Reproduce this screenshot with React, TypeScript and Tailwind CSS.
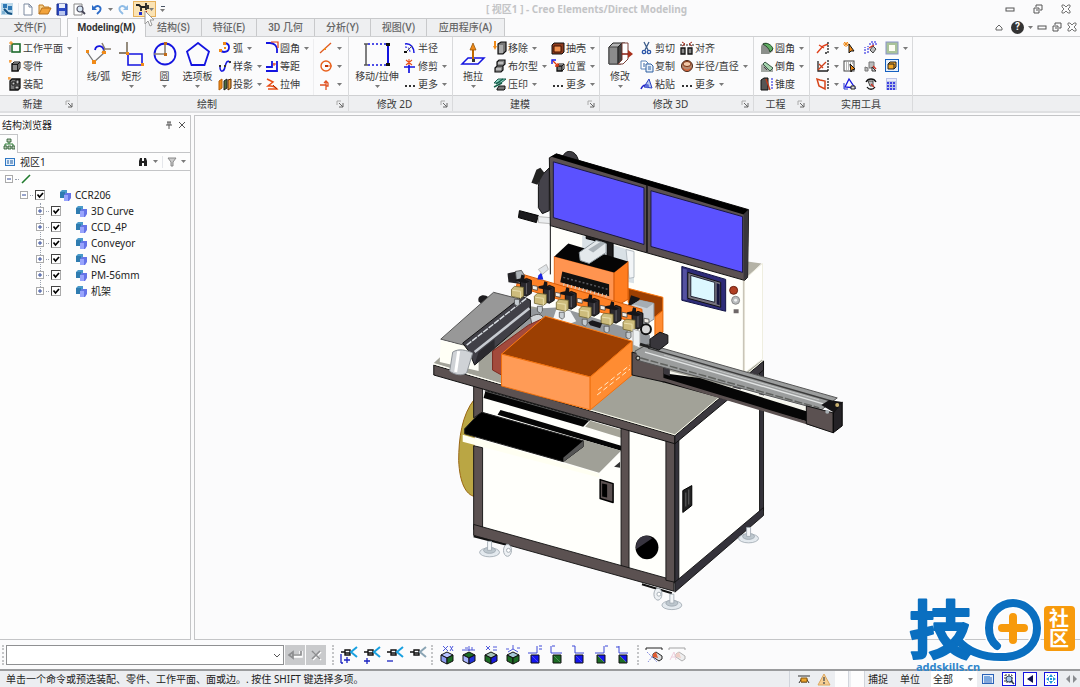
/**
 * Creo Elements/Direct Modeling: main window.
 * --------------------------------------------------------------------------
 * Quick access bar, ribbon, structure browser, 3D viewport, command line and
 * status bar. The viewport takes whatever height the bars leave over.
 */
import type { ReactNode } from "react";

const BLUE = "#1414e0";
const ORANGE = "#f08a18";

/* ------------------------------------------------------------------ icons */

function Svg({ w = 14, h = 14, children }: { w?: number; h?: number; children: ReactNode }) {
  return (
    <svg width={w} height={h} viewBox={`0 0 ${w} ${h}`} fill="none" className="shrink-0" aria-hidden="true">
      {children}
    </svg>
  );
}

const ICONS: Record<string, ReactNode> = {
  workplane: (
    <Svg>
      <rect x="4" y="3" width="8" height="8" stroke="#1d6b2c" strokeWidth="1.6" />
      <path d="M1 2h4M3 0v4" stroke={ORANGE} />
      <path d="M2 4v7" stroke="#555" />
    </Svg>
  ),
  part: (
    <Svg>
      <path d="M4 5h6v7H4z" fill="#8d8d8d" stroke="#111" strokeWidth="1.4" />
      <path d="M4 5l2-2h6l-2 2zM10 5l2-2v6l-2 3z" fill="#c8c8c8" stroke="#111" />
      <path d="M1 2h3M2 1v3" stroke={ORANGE} />
    </Svg>
  ),
  assembly: (
    <Svg>
      <path d="M2 4l2-2h8v9l-2 2H2z" fill="#777" stroke="#111" strokeWidth="1.3" />
      <path d="M4 5h3v3H4zM8 3h3v4H8zM7 9h4v3H7z" fill="#ccc" stroke="#111" />
      <path d="M0 1h3M1 0v3" stroke={ORANGE} />
    </Svg>
  ),
  arc: (
    <Svg>
      <path d="M7 2c6 1 5 9-1 9-2 0-3-1-4-2" stroke={BLUE} strokeWidth="1.8" />
      <path d="M5 1h3v3H5zM1 8h3v3H1zM6 6h2v2H6z" fill={ORANGE} />
    </Svg>
  ),
  spline: (
    <Svg>
      <path d="M2 8c0 6 4 5 5 0s3-8 5-4" stroke={BLUE} strokeWidth="1.5" />
      <path d="M1 6h2v2H1zM6 6h2v2H6zM11 2h2v2h-2z" fill="#333" />
    </Svg>
  ),
  project: (
    <Svg>
      <path d="M1 4l3-2v9l-3 2z" fill={ORANGE} stroke="#b45f06" />
      <path d="M6 4l3-2v9l-3 2z" fill="#4d6b3c" stroke="#222" />
      <path d="M10 3l3-1v9l-3 2z" fill="#e8a040" stroke="#5a2a00" />
    </Svg>
  ),
  fillet2d: (
    <Svg>
      <path d="M1 2h4c4 0 7 3 7 6v4" stroke={BLUE} strokeWidth="1.8" />
      <path d="M6 1h7v6" stroke="#e03a10" strokeWidth="1.2" />
    </Svg>
  ),
  offset: (
    <Svg>
      <path d="M1 12h11V2M1 8h6V2" stroke={BLUE} strokeWidth="1.8" />
      <path d="M8 5h3M9 4v3" stroke="#e03a10" />
    </Svg>
  ),
  stretch: (
    <Svg>
      <path d="M2 2l6 3-5 4c3 0 6-1 9 3H3" stroke="#e8501a" strokeWidth="1.5" />
      <path d="M8 8l4 4" stroke="#b02800" />
    </Svg>
  ),
  line: (
    <Svg>
      <path d="M1 12L12 2" stroke="#e05a20" strokeWidth="1.3" />
      <path d="M5 7h2v2H5z" fill={ORANGE} />
    </Svg>
  ),
  circleSmall: (
    <Svg>
      <circle cx="7" cy="7" r="5" stroke="#e8601c" strokeWidth="1.4" />
      <path d="M6 6h3v2H6z" fill="#c03000" />
      <path d="M9 7h4" stroke="#e8601c" />
    </Svg>
  ),
  point: (
    <Svg>
      <path d="M1 8h6M7 13V4M5 6l2-2 2 2v3H7" stroke="#e05020" strokeWidth="1.3" />
    </Svg>
  ),
  radius: (
    <Svg>
      <path d="M2 3c6-1 9 4 9 9" stroke={BLUE} strokeWidth="1.5" />
      <path d="M2 6c4 0 5 2 5 6" stroke={BLUE} strokeDasharray="2 1" />
      <path d="M1 10h3v2H1z" fill="#111" />
      <path d="M4 10l5-5" stroke="#555" />
    </Svg>
  ),
  trim: (
    <Svg>
      <path d="M1 8h11M6 6v8" stroke={BLUE} strokeWidth="1.7" />
      <path d="M6 0v6M3 1l6 5M9 1L3 6" stroke="#e8501a" strokeWidth="1.1" />
    </Svg>
  ),
  dots: (
    <Svg>
      <path d="M2 8h2v2H2zM6 8h2v2H6zM10 8h2v2h-2z" fill="#333" />
    </Svg>
  ),
  remove: (
    <Svg>
      <path d="M5 3l3-2h5v9l-3 3H5z" fill="#777" stroke="#111" strokeWidth="1.2" />
      <path d="M7 4v8M9 4v8" stroke="#ddd" />
      <path d="M1 0h2v5H1z" fill={ORANGE} />
      <path d="M0 5h4L2 9z" fill={ORANGE} />
    </Svg>
  ),
  bool: (
    <Svg>
      <path d="M4 3l2-2h6v4l-2 2H4zM2 9l2-2h6v4l-2 2H2z" fill="#888" stroke="#111" strokeWidth="1.2" />
      <path d="M5 4h5M3 10h5" stroke="#eee" />
    </Svg>
  ),
  imprint: (
    <Svg>
      <path d="M1 6l4-4h8l-5 4z" fill="#8fd3c4" stroke="#1b5e50" />
      <path d="M4 12l2-3h6v3l-1 1H4z" fill="#777" stroke="#111" />
      <path d="M3 7l7-5M1 10l8-4" stroke="#14604a" strokeWidth="1.4" />
    </Svg>
  ),
  shell: (
    <Svg>
      <path d="M1 4l2-2h10v9l-2 2H1z" fill="#8b3a1e" stroke="#111" />
      <path d="M3 5h7v6H3z" fill="#f09050" stroke="#401000" />
    </Svg>
  ),
  position: (
    <Svg>
      <path d="M6 7h5v5H6z" fill="#777" stroke="#111" strokeWidth="1.3" />
      <path d="M6 7l2-2h5l-2 2M13 5v5l-2 2" stroke="#111" />
      <path d="M2 2l5 5M7 4v3H4" stroke="#e03a10" strokeWidth="1.3" />
      <path d="M1 5V1h4" stroke={BLUE} strokeWidth="1.4" />
    </Svg>
  ),
  cut: (
    <Svg>
      <path d="M4 1l4 8M9 1L5 9" stroke="#3c5c8a" strokeWidth="1.3" />
      <circle cx="4" cy="11" r="1.7" stroke="#2a55a8" strokeWidth="1.3" />
      <circle cx="9" cy="11" r="1.7" stroke="#2a55a8" strokeWidth="1.3" />
    </Svg>
  ),
  copy: (
    <Svg>
      <path d="M1 2h5l2 2v6H1z" fill="#fff" stroke="#5a83b8" />
      <path d="M6 5h5l2 2v6H6z" fill="#e6f0fb" stroke="#2f5f9f" />
      <path d="M8 8h3M8 10h3M3 5h2M3 7h2" stroke="#2f5f9f" />
    </Svg>
  ),
  paste: (
    <Svg>
      <path d="M4 10l5-8 3 9z" fill="#b9c8ef" stroke="#2a3fc0" />
      <path d="M1 12c2-5 6-5 7-1" stroke="#2222c8" strokeWidth="1.5" />
      <circle cx="7" cy="9" r="2" fill="#5a6bd8" />
    </Svg>
  ),
  align: (
    <Svg>
      <path d="M0 4h14" stroke="#222" strokeDasharray="2 1" />
      <path d="M1 7h4v6H1zM8 7h4v6H8z" fill="#888" stroke="#111" strokeWidth="1.3" />
      <path d="M2 1l3 2-3 2M12 1L9 3l3 2" stroke="#a02a18" />
    </Svg>
  ),
  radiusDia: (
    <Svg>
      <circle cx="7" cy="7" r="5.5" fill="#b88a70" stroke="#4a2414" />
      <ellipse cx="7" cy="5" rx="4" ry="2.5" fill="#f2c8a8" stroke="#7a3010" />
      <path d="M3 9c2 3 6 3 8 0" stroke="#e05020" />
    </Svg>
  ),
  blend: (
    <Svg>
      <path d="M1 13V6c0-3 3-5 6-4l6 5v3l-4 3z" fill="#8b8f8b" />
      <path d="M3 3c4-2 9 1 10 5l-3 3C9 7 6 5 3 3z" fill="#5fae62" stroke="#23482a" />
    </Svg>
  ),
  chamfer: (
    <Svg>
      <path d="M1 13V6l4-3 8 6v4z" fill="#a3a8a3" />
      <path d="M3 5l2-2 8 6-3 3z" fill="#a8d6b0" stroke="#3a5a48" />
      <path d="M4 8l3 3" stroke="#444" />
    </Svg>
  ),
  taper: (
    <Svg>
      <path d="M1 3l3-2h4v12H1z" fill="#555" stroke="#111" />
      <path d="M6 2l4 11" stroke="#c03a1a" strokeWidth="1.4" />
      <path d="M12 1v12" stroke={BLUE} strokeDasharray="2 1" />
    </Svg>
  ),
  measA: (
    <Svg>
      <path d="M1 12l6-7 5-2M3 4l5 3" stroke="#e0401a" strokeWidth="1.4" />
      <path d="M12 1v12M9 12h3" stroke="#222" strokeWidth="1.3" strokeDasharray="2 1" />
    </Svg>
  ),
  measB: (
    <Svg>
      <path d="M2 2v10h10" stroke="#222" strokeWidth="1.3" />
      <path d="M2 11l8-8M3 5l4 4" stroke="#d0401a" strokeWidth="1.3" />
      <path d="M12 1v12" stroke="#222" strokeWidth="1.3" strokeDasharray="2 1" />
    </Svg>
  ),
  measC: (
    <Svg>
      <path d="M1 2l2 7 6 3V4L4 3z" stroke="#d8461a" strokeWidth="1.5" />
      <path d="M12 1v12" stroke="#222" strokeWidth="1.3" strokeDasharray="2 1" />
    </Svg>
  ),
  selStar: (
    <Svg>
      <path d="M3 1v5M0 3h6M1 1l4 4M5 1L1 5" stroke={ORANGE} />
      <path d="M6 3l5 7H8l-2 2z" fill={ORANGE} stroke="#111" />
    </Svg>
  ),
  selList: (
    <Svg>
      <rect x="1" y="2" width="10" height="10" fill="#fff" stroke="#444" />
      <path d="M3 4h7M3 6h5M3 8h4M3 10h4" stroke="#777" strokeDasharray="1 1" />
      <path d="M7 5l5 5-3 1-1 2z" fill={ORANGE} stroke="#111" />
    </Svg>
  ),
  angle: (
    <Svg>
      <path d="M2 10l4-8 6 9z" stroke={BLUE} strokeWidth="1.3" />
      <path d="M1 6v6h4" stroke="#2233cc" />
      <path d="M8 9h4v3H8z" fill="#ddd" stroke="#222" />
    </Svg>
  ),
  utilA: (
    <Svg>
      <path d="M1 13V6M4 12V5M5 3h8M7 1h6" stroke={BLUE} strokeDasharray="2 1" />
      <path d="M6 9l3-4 3 3-3 4z" fill="#bbb" stroke="#444" />
      <path d="M5 7l5-3" stroke="#d03020" strokeWidth="1.4" />
    </Svg>
  ),
  utilB: (
    <Svg>
      <path d="M1 8l3 1v3H1zM5 3h5v6H5z" fill="#bbb" stroke="#777" />
      <path d="M8 8l4 4H8z" fill="#ddd" stroke="#333" />
      <path d="M9 7l3 3" stroke="#d03020" strokeWidth="1.4" />
    </Svg>
  ),
  utilC: (
    <Svg>
      <path d="M2 5c2-4 8-4 10 0M11 10c-2 3-6 3-8 0" stroke="#111" strokeWidth="1.3" />
      <path d="M4 4h5v5H6z" fill="#bbb" stroke="#444" />
      <path d="M7 7l3 3" stroke="#d03020" strokeWidth="1.3" />
    </Svg>
  ),
  viewBorder: (
    <Svg>
      <rect x="1" y="1" width="12" height="12" fill="#a9c39a" stroke="#8a94c8" />
      <rect x="4" y="4" width="6" height="6" fill="#fdfdf4" />
    </Svg>
  ),
  viewBox: (
    <Svg>
      <rect x="0.5" y="0.5" width="13" height="12" fill="#e8f1fb" stroke="#1560c0" />
      <path d="M3 5l2-2h6v5l-2 2H3z" fill="#f5a623" stroke="#222" />
      <path d="M3 5h6v5" stroke="#222" />
    </Svg>
  ),
  calc: (
    <Svg>
      <rect x="1" y="1" width="11" height="12" fill="#bcc4e8" />
      <path d="M2 2h9v2H2z" fill="#e9ecfa" />
      <path d="M2 6h9M2 9h9M2 12h9" stroke={BLUE} strokeWidth="1.6" strokeDasharray="2 1" />
    </Svg>
  ),
};

const BIG_ICONS: Record<string, ReactNode> = {
  lineArc: (
    <Svg w={28} h={26}>
      <path d="M2 10l7 10L20 10" stroke="#777" strokeWidth="1.3" />
      <path d="M10 8c1-6 9-5 9 2" stroke={BLUE} strokeWidth="1.8" />
      <path d="M17 1l3 6h6M20 7l-3 4" stroke="#8a8070" strokeWidth="1.5" />
      <path d="M1 8h3v3H1zM7 18h4v4H7zM17 9h4v3h-4z" fill={ORANGE} />
    </Svg>
  ),
  rect: (
    <Svg w={28} h={26}>
      <path d="M9 0v11M1 11h8" stroke="#8a8070" strokeWidth="1.8" />
      <path d="M10 12h14v11H10z" stroke={BLUE} strokeWidth="1.6" />
      <path d="M8 10h3v3H8zM23 21h3v3h-3z" fill={ORANGE} />
    </Svg>
  ),
  circle: (
    <Svg w={28} h={26}>
      <circle cx="14" cy="12" r="10.5" stroke={BLUE} strokeWidth="1.8" />
      <path d="M14 2v10H3" stroke="#8a8070" strokeWidth="1.6" />
      <path d="M13 11h3v3h-3zM13 0h3v3h-3z" fill="#c06a18" />
    </Svg>
  ),
  palette: (
    <Svg w={28} h={26}>
      <path d="M14 1l11 8.500-4.500 13.500h-13L3 9.500z" stroke={BLUE} strokeWidth="1.8" />
    </Svg>
  ),
  move2d: (
    <Svg w={28} h={26}>
      <path d="M3 2v21M1 2h4M1 23h4" stroke="#555" strokeWidth="1.5" />
      <path d="M5 2h19M5 23h19" stroke={BLUE} strokeWidth="1.5" strokeDasharray="2 2" />
      <path d="M25 2v21" stroke={BLUE} strokeWidth="2" />
      <path d="M23 1h4v3h-4zM23 21h4v3h-4z" fill="#111" />
    </Svg>
  ),
  pull: (
    <Svg w={28} h={26}>
      <path d="M3 22l6-6h16l-6 6z" stroke={BLUE} strokeWidth="1.5" />
      <path d="M14 19V7" stroke="#c06a00" strokeWidth="2" />
      <path d="M11 8l3-7 3 7z" fill={ORANGE} stroke="#8a4a00" strokeWidth="0.7" />
      <path d="M13 17h3v3h-3z" fill="#333" />
    </Svg>
  ),
  modify: (
    <Svg w={28} h={26}>
      <path d="M3 5l4-4h12v17l-4 4H3z" fill="#b4b4b4" stroke="#222" />
      <path d="M3 5h9v17H3z" fill="#8c8c8c" stroke="#444" />
      <path d="M12 5l4-4v17l-4 4z" fill="#444" stroke="#222" />
      <path d="M16 1h6v16l-5 5h-5l4-4z" fill="#fff" stroke="#7a4038" />
      <path d="M16 12h8" stroke="#8a1c10" strokeWidth="1.5" />
      <path d="M22 8l5 4-5 4z" fill="#a8301c" />
    </Svg>
  ),
};

const Caret = ({ className = "" }: { className?: string }) => (
  <svg width="5" height="3" viewBox="0 0 5 3" className={`shrink-0 ${className}`} aria-hidden="true">
    <path d="M0 0h5L2.500 3z" fill="#7a7a7a" />
  </svg>
);

/* ----------------------------------------------------------------- ribbon */

type Item = { icon: string; label?: string; caret?: boolean; name?: string };

function Tool({ icon, label, caret, name }: Item) {
  return (
    <button type="button" aria-label={name} className="flex h-[18px] items-center whitespace-nowrap">
      {ICONS[icon]}
      {label && <span className="ml-px">{label}</span>}
      {caret && <Caret className="ml-1" />}
    </button>
  );
}

function Column({ items, className }: { items: Item[]; className: string }) {
  return (
    <div className={`flex shrink-0 flex-col items-start ${className}`}>
      {items.map((it) => (
        <Tool key={it.label ?? it.name} {...it} />
      ))}
    </div>
  );
}

function BigTool({ icon, label, caret = true, className = "w-[33px]" }: { icon: string; label: string; caret?: boolean; className?: string }) {
  return (
    <button type="button" className={`flex shrink-0 flex-col items-center self-start pt-[3px] ${className}`}>
      {BIG_ICONS[icon]}
      <span className="h-4 whitespace-nowrap leading-4">{label}</span>
      {caret && <Caret className="mt-px" />}
    </button>
  );
}

function Group({ title, width, launcher = true, children }: { title: string; width: string; launcher?: boolean; children: ReactNode }) {
  return (
    <section aria-label={title} className={`flex shrink-0 flex-col border-r border-[#d9dadc] ${width}`}>
      <div className="flex h-[58px] pt-[2px]">{children}</div>
      <div className="flex h-4 items-center border-t border-[#cfd0d2] bg-[#eeeff1]">
        <span className="flex-1 text-center">{title}</span>
        {launcher && (
          <button type="button" aria-label={`${title} …`} className="mr-1 pt-px">
            <Svg w={8} h={8}>
              <path d="M1 5V1h4" stroke="#aaa" />
              <path d="M3 3l4 4M7 3v4H3" stroke="#666" />
            </Svg>
          </button>
        )}
      </div>
    </section>
  );
}

function Ribbon() {
  return (
    <div className="flex border-b-2 border-[#dfe0e2] bg-[#fbfbfc]">
      <Group title="新建" width="w-[78px]">
        <Column
          className="pl-2"
          items={[{ icon: "workplane", label: "工作平面", caret: true }, { icon: "part", label: "零件" }, { icon: "assembly", label: "装配" }]}
        />
      </Group>
      <Group title="绘制" width="w-[271px]">
        <div className="flex pl-1">
          <BigTool icon="lineArc" label="线/弧" caret={false} />
          <BigTool icon="rect" label="矩形" />
          <BigTool icon="circle" label="圆" />
          <BigTool icon="palette" label="选项板" />
        </div>
        <Column
          className="w-[51px] pl-1"
          items={[{ icon: "arc", label: "弧", caret: true }, { icon: "spline", label: "样条", caret: true }, { icon: "project", label: "投影", caret: true }]}
        />
        <Column
          className="w-12"
          items={[{ icon: "fillet2d", label: "圆角", caret: true }, { icon: "offset", label: "等距" }, { icon: "stretch", label: "拉伸" }]}
        />
        <Column
          className="border-l border-[#eeeef0] pl-[5px]"
          items={[{ icon: "line", name: "直线", caret: true }, { icon: "circleSmall", name: "参考圆", caret: true }, { icon: "point", name: "点", caret: true }]}
        />
      </Group>
      <Group title="修改 2D" width="w-[104px]">
        <BigTool icon="move2d" label="移动/拉伸" className="w-14" />
        <Column
          className="-ml-[2px]"
          items={[{ icon: "radius", label: "半径" }, { icon: "trim", label: "修剪", caret: true }, { icon: "dots", label: "更多", caret: true }]}
        />
      </Group>
      <Group title="建模" width="w-[147px]">
        <BigTool icon="pull" label="拖拉" className="w-10" />
        <Column
          className="w-[58px]"
          items={[{ icon: "remove", label: "移除", caret: true }, { icon: "bool", label: "布尔型", caret: true }, { icon: "imprint", label: "压印", caret: true }]}
        />
        <Column
          className=""
          items={[{ icon: "shell", label: "抽壳", caret: true }, { icon: "position", label: "位置", caret: true }, { icon: "dots", label: "更多", caret: true }]}
        />
      </Group>
      <Group title="修改 3D" width="w-[154px]">
        <BigTool icon="modify" label="修改" className="w-10" />
        <Column
          className="w-10"
          items={[{ icon: "cut", label: "剪切" }, { icon: "copy", label: "复制" }, { icon: "paste", label: "粘贴" }]}
        />
        <Column
          className=""
          items={[{ icon: "align", label: "对齐" }, { icon: "radiusDia", label: "半径/直径", caret: true }, { icon: "dots", label: "更多", caret: true }]}
        />
      </Group>
      <Group title="工程" width="w-14">
        <Column
          className="pl-[6px]"
          items={[{ icon: "blend", label: "圆角", caret: true }, { icon: "chamfer", label: "倒角", caret: true }, { icon: "taper", label: "锥度" }]}
        />
      </Group>
      <Group title="实用工具" width="w-[103px]" launcher={false}>
        <Column
          className="w-7 pl-[6px]"
          items={[{ icon: "measA", name: "测量", caret: true }, { icon: "measB", name: "测量角度", caret: true }, { icon: "measC", name: "测量面", caret: true }]}
        />
        <Column className="ml-[5px] w-[21px]" items={[{ icon: "selStar", name: "选择" }, { icon: "selList", name: "选择列表" }, { icon: "angle", name: "角度" }]} />
        <Column className="w-[21px]" items={[{ icon: "utilA", name: "对比" }, { icon: "utilB", name: "检查" }, { icon: "utilC", name: "刷新" }]} />
        <Column className="" items={[{ icon: "viewBorder", name: "边框", caret: true }, { icon: "viewBox", name: "视图框" }, { icon: "calc", name: "计算器" }]} />
      </Group>
      <div className="flex flex-1 flex-col justify-end">
        <div className="h-4 border-t border-[#cfd0d2] bg-[#eeeff1]" />
      </div>
    </div>
  );
}

/* ---------------------------------------------------------------- top bar */

function WindowButtons({ gap }: { gap: string }) {
  return (
    <div className={`flex items-center ${gap}`}>
      <button type="button" aria-label="最小化">
        <Svg w={10} h={10}>
          <rect x="1" y="4" width="8" height="3" stroke="#555" />
        </Svg>
      </button>
      <button type="button" aria-label="还原">
        <Svg w={10} h={10}>
          <path d="M3 3V1h6v5H7" stroke="#555" />
          <path d="M1 4h5v5H1zM3 6h2" stroke="#555" />
        </Svg>
      </button>
      <button type="button" aria-label="关闭">
        <Svg w={10} h={10}>
          <path d="M1 1h2l2 2 2-2h2v2L7 5l2 2v2H7L5 7 3 9H1V7l2-2-2-2z" stroke="#666" strokeWidth="0.9" />
        </Svg>
      </button>
    </div>
  );
}

function TitleBar() {
  return (
    <header className="flex h-[18px] items-center">
      <div className="flex w-[168px] shrink-0 items-center">
        <Svg w={18} h={16}>
          <path d="M1 2h12v12H1z" fill="#bcd8ea" />
          <path d="M3 3h4v4H3zM8 5h4v4H8z" fill="#2f78b4" />
          <path d="M4 8l4 4 4 1" stroke="#135080" strokeWidth="2" />
          <path d="M2 10h3v3H2z" fill="#7fb2d4" />
        </Svg>
        <span className="mr-1 h-3 w-px bg-gray-200" />
        <button type="button" aria-label="新建文件">
          <Svg w={10} h={14}>
            <path d="M1 2h5l3 3v8H1z" fill="#fff" stroke="#7c8aa0" />
            <path d="M6 2v3h3" stroke="#7c8aa0" />
          </Svg>
        </button>
        <button type="button" aria-label="打开" className="ml-[5px]">
          <Svg w={14} h={14}>
            <path d="M1 12V3h4l1 2h5v2" fill="#f6d08a" stroke="#c07a20" />
            <path d="M1 12l3-6h9l-3 6z" fill="#f2a33c" stroke="#b8701a" />
          </Svg>
        </button>
        <button type="button" aria-label="保存" className="ml-1">
          <Svg w={12} h={14}>
            <path d="M1 2h10v11H1z" fill="#2b48c4" stroke="#1a2c86" />
            <path d="M3 2h6v4H3z" fill="#e9eefb" />
            <path d="M3 9h6v4H3z" fill="#b9c6ee" />
          </Svg>
        </button>
        <button type="button" aria-label="预览" className="ml-[5px]">
          <Svg w={13} h={14}>
            <path d="M1 2h8v11H1z" fill="#fff" stroke="#888" />
            <circle cx="7" cy="7" r="3" fill="#d8e8f6" stroke="#556" strokeWidth="1.2" />
            <path d="M9 9l3 3" stroke="#445" strokeWidth="1.8" />
          </Svg>
        </button>
        <button type="button" aria-label="撤消" className="ml-[5px] flex items-center">
          <Svg w={12} h={14}>
            <path d="M3 6c4-4 8-1 6 3-1 1-2 2-3 3" stroke="#2d6cc8" strokeWidth="1.8" />
            <path d="M1 3v5h5z" fill="#2d6cc8" />
          </Svg>
          <Caret className="ml-[5px]" />
        </button>
        <button type="button" aria-label="重做" className="ml-1">
          <Svg w={12} h={14}>
            <path d="M9 6C5 2 1 5 3 9c1 1 2 2 3 3" stroke="#8fbce6" strokeWidth="1.8" />
            <path d="M11 3v5H6z" fill="#8fbce6" />
          </Svg>
        </button>
        <button type="button" aria-label="选择" className="ml-1 flex h-4 w-[23px] shrink-0 items-center justify-center border border-[#e6b15c] bg-[#fbe3b4]">
          <Svg w={14} h={14}>
            <path d="M1 3h3l2 2h5M11 1v7M6 4v5M13 3v4" stroke="#222" strokeWidth="1.8" />
            <path d="M4 10h3v3H4z" fill="#2030d0" />
            <path d="M10 9h2v4h-2z" fill="#d03020" />
          </Svg>
          <Caret />
        </button>
        <button type="button" aria-label="自定义" className="ml-1 flex flex-col items-center gap-[2px]">
          <span className="h-px w-1 bg-gray-600" />
          <Caret />
        </button>
      </div>
      <h1 className="flex-1 text-center font-bold text-[#c3c4c6]">[ 视区1 ] - Creo Elements/Direct Modeling</h1>
      <div className="w-[75px] shrink-0">
        <WindowButtons gap="gap-[18px]" />
      </div>
    </header>
  );
}

const TABS = [
  { label: "结构(S)", width: "w-14" },
  { label: "特征(E)", width: "w-[55px]" },
  { label: "3D 几何", width: "w-[58px]" },
  { label: "分析(Y)", width: "w-14" },
  { label: "视图(V)", width: "w-14" },
  { label: "应用程序(A)", width: "w-[78px]" },
];

function TabBar() {
  return (
    <nav className="flex h-[19px] items-stretch border-b border-[#cfd0d2] font-['Roboto','Noto_Sans_CJK_SC',sans-serif] font-medium text-[#666]">
      <button type="button" className="w-[61px] border-r border-t border-[#c8c9cb] bg-[#eeeff1]">
        文件(F)
      </button>
      <button type="button" className="-mb-px ml-[6px] w-[79px] border-l border-r border-t border-[#c8c9cb] bg-[#fbfbfc] font-bold text-[#333]">
        Modeling(M)
      </button>
      {TABS.map((t) => (
        <button key={t.label} type="button" className={`border-r border-t border-[#c8c9cb] bg-[#eeeff1] ${t.width}`}>
          {t.label}
        </button>
      ))}
      <div className="ml-auto flex items-center gap-1 pr-[3px]">
        <button type="button" aria-label="折叠功能区">
          <Svg w={8} h={8}>
            <path d="M1 5l3-3 3 3v2H1z" stroke="#666" />
          </Svg>
        </button>
        <button type="button" aria-label="帮助" className="ml-1 flex items-center gap-1">
          <span className="flex size-[13px] items-center justify-center rounded-full bg-[#333] text-[10px] font-bold text-white">?</span>
          <Caret />
        </button>
        <WindowButtons gap="gap-[5px]" />
      </div>
    </nav>
  );
}

/* ------------------------------------------------------ structure browser */

const PARTS = ["3D Curve", "CCD_4P", "Conveyor", "NG", "PM-56mm", "机架"];

function Expander({ open }: { open?: boolean }) {
  return (
    <button type="button" aria-label={open ? "折叠" : "展开"} className="shrink-0">
      <Svg w={8} h={8}>
        <rect x="0.5" y="0.5" width="7" height="7" fill="#fff" stroke="#aaa" />
        <path d={open ? "M2 4h4" : "M2 4h4M4 2v4"} stroke="#334a9a" />
      </Svg>
    </button>
  );
}

function TreeNode({ label, open, indent }: { label: string; open?: boolean; indent: string }) {
  return (
    <li className={`flex h-4 items-center ${indent}`}>
      <Expander open={open} />
      <span className="mx-[2px] w-[3px] border-t border-dotted border-gray-400" />
      <label className="flex items-center">
        <span className="relative flex size-[10px]">
          <input type="checkbox" defaultChecked className="peer size-[10px] appearance-none border border-l-[#444] border-t-[#444] border-[#aaa] bg-white" />
          <svg viewBox="0 0 10 10" fill="none" className="pointer-events-none absolute inset-0 hidden size-[10px] peer-checked:block">
            <path d="M2.500 4.500l2 2.500 3.500-4" stroke="#000" strokeWidth="1.7" />
          </svg>
        </span>
        <span className="ml-[14px] mr-[3px]">
          <Svg w={13} h={12}>
            <path d="M1 3l2-2h5v6l-2 2H1z" fill="#4a9aca" />
            <path d="M1 3h5v6H1z" fill="#2f7cb0" />
            <path d="M5 6l2-2h5v5l-2 3H5z" fill="#6674e8" />
            <path d="M5 6h4v6H5z" fill="#98a4fc" />
          </Svg>
        </span>
        {label}
      </label>
    </li>
  );
}

function Browser() {
  return (
    <aside className="flex w-[191px] shrink-0 flex-col border-b border-r border-t border-[#c4c5c7] bg-[#fdfdfd] text-[#222]">
      <div className="flex h-[17px] items-center pl-[2px] pr-1">
        <h2 className="flex-1 text-[10px]">结构浏览器</h2>
        <button type="button" aria-label="固定">
          <Svg w={8} h={8}>
            <path d="M2 1h4M3 1v3M5 1v3M1 4h6M4 4v4" stroke="#555" />
          </Svg>
        </button>
        <button type="button" aria-label="关闭浏览器" className="ml-[5px]">
          <Svg w={8} h={8}>
            <path d="M1 1l6 6M7 1L1 7" stroke="#555" />
          </Svg>
        </button>
      </div>
      <div className="flex h-5 items-end border-b border-[#c4c5c7]">
        <button type="button" aria-label="结构" className="-mb-px flex h-[19px] w-[18px] items-center justify-center border-r border-t border-[#c4c5c7] bg-[#fdfdfd]">
          <Svg w={12} h={12}>
            <path d="M6 4v2M2 9V6h8v3" stroke="#287a30" />
            <path d="M4 1h4v3H4zM1 8h3v3H1zM5 8h3v3H5zM9 8h3v3H9z" fill="#b9c8b4" stroke="#22562a" strokeWidth="0.8" />
          </Svg>
        </button>
      </div>
      <div className="flex h-[18px] items-center border-b border-[#c4c5c7] pl-[5px] pr-1">
        <Svg w={10} h={10}>
          <rect x="0.5" y="1.5" width="9" height="7" fill="#e6f0fb" stroke="#2f78c4" />
          <path d="M2 4h2M2 6h2M5 4h3M5 6h3" stroke="#1b5aa0" />
        </Svg>
        <span className="ml-[5px] flex-1 text-[10px]">视区1</span>
        <button type="button" aria-label="查找" className="flex items-center gap-[5px]">
          <Svg w={10} h={10}>
            <path d="M1 4l1-3h2v3h2V1h2l1 3v5H6V6H4v3H1z" fill="#222" />
          </Svg>
          <Caret />
        </button>
        <span className="mx-1 h-3 w-px bg-gray-200" />
        <button type="button" aria-label="过滤" className="flex items-center gap-1">
          <Svg w={10} h={10}>
            <path d="M1 1h8L6 5v4H4V5z" fill="#ccc" stroke="#888" />
          </Svg>
          <Caret />
        </button>
      </div>
      <ul className="flex-1">
        <li className="flex h-4 items-center pl-[5px]">
          <Expander open />
          <span className="mx-[2px] w-1 border-t border-dotted border-gray-400" />
          <Svg w={10} h={10}>
            <path d="M1 9l8-8" stroke="#1f7a2c" strokeWidth="1.6" />
          </Svg>
        </li>
        <TreeNode label="CCR206" open indent="pl-[20px]" />
        <li className="relative">
          <span className="absolute bottom-2 left-[40px] top-0 border-l border-dotted border-gray-400" />
          <ul className="relative">
            {PARTS.map((p) => (
              <TreeNode key={p} label={p} indent="pl-[36px]" />
            ))}
          </ul>
        </li>
      </ul>
    </aside>
  );
}

/* --------------------------------------------------------------- viewport */

// Pick-up stations along the orange rail.
const STATIONS: [number, number][] = [
  [516, 292],
  [539, 299],
  [561, 305],
  [584, 312],
  [606, 319],
  [628, 325],
];

const FEET: [number, number][] = [
  [489, 554],
  [749, 540],
  [672, 607],
];

const CASTORS: [number, number][] = [
  [507, 552],
  [658, 596],
];

function Machine() {
  return (
    <svg viewBox="195 116 885 525" className="block size-full" role="img" aria-label="CCR206" strokeLinejoin="round">
      {/* reel on the left side */}
      <path d="M474 400C461 416 458 440 458 462C459 484 465 496 474 498z" fill="#baa644" stroke="#9a6512" />

      {/* table frame, front and side sheets */}
      <path d="M474 392L674 441V590L474 534z" fill="#fffffb" />
      <path d="M676 441L764 367V512L676 590z" fill="#fffffd" />

      {/* drawer and keyboard */}
      <path d="M590 422L621 431V439L585 428z" fill="#a5a498" />
      <path d="M485 391L590 421L583 428L483 399z" fill="#050505" />
      <path d="M484 392L590 422" stroke="#555" />
      <path d="M500 411L621 447V452L497 416z" fill="#050505" />
      <path d="M583 441L621 452L599 474L562 463z" fill="#a0a097" />
      <path d="M462 436L599 475V479L462 443z" fill="#fffff2" />
      <path d="M480 413L583 442V448L563 463L464 435V430z" fill="#000" stroke="#222" />
      <path d="M583 442V448L563 463V459z" fill="#555" />
      <path d="M614 468l6-5v6z" fill="#333" />

      {/* posts and beams */}
      <g stroke="#111" strokeWidth="0.9">
        <path d="M473 386h9v27l-9 6z" fill="#5b5151" />
        <path d="M473 447l9 2v82h-9z" fill="#5b5151" />
        <path d="M621 428l8 2v141l-8-2z" fill="#5b5151" />
        <path d="M473 526L674 582V593L473 537z" fill="#5b5151" />
        <path d="M666 441h9v143l-9-2z" fill="#5b5151" />
        <path d="M675 442l4-3v142l-4 4z" fill="#34323a" />
        <path d="M760 362h4v150l-4 4z" fill="#34323a" />
        <path d="M675 584L764 509V517L675 594z" fill="#34323a" />
      </g>
      <path d="M473 538l35 9M642 586l30 9" stroke="#111" strokeWidth="2" />

      {/* table top */}
      <path d="M433 364L500 302L668 330L764 362L675 437z" fill="#a2a298" />
      <path d="M433 366L675 437V445L433 376z" fill="#5b5151" stroke="#111" />
      <path d="M675 437L764 362V371L675 445z" fill="#3b383e" stroke="#111" />
      <path d="M433 365L675 436L764 361" fill="none" stroke="#fffff0" />

      {/* back cabinet, standing on the table top */}
      <path d="M550 220L662 250V345L550 312z" fill="#fffffa" />
      <path d="M550 220V275" stroke="#111" fill="none" />
      <path d="M748 262L762 264L745 280z" fill="#b4b2a6" />
      <path d="M662 245L745 275V374L662 352z" fill="#fffffa" />
      <path d="M745 280L763 264V360L745 374z" fill="#fffffc" stroke="#efeee0" />
      <path d="M744 281V374" stroke="#c9c5b8" strokeWidth="1.5" />

      {/* handles and cable hole */}
      <path d="M600 481l13 4v19l-13-4z" fill="#5b5151" stroke="#000" strokeWidth="1.5" />
      <path d="M602 485l5 1v13l-5-1z" fill="#000" />
      <path d="M683 492l9-5v20l-9 7z" fill="#222" stroke="#000" />
      <path d="M686 494v14M689 491v15" stroke="#666" />
      <ellipse cx="647" cy="549" rx="11.500" ry="12" fill="#000" />
      <path d="M636 551c-1-15 13-16 16-11z" fill="#383540" />

      {/* feet */}
      {FEET.map(([x, y]) => (
        <g key={x} stroke="#9ca6ae" strokeWidth="0.8">
          <ellipse cx={x} cy={y} rx="10" ry="4.500" fill="#e3e9ee" />
          <ellipse cx={x} cy={y - 2} rx="6" ry="3" fill="#bcc6cd" />
          <path d={`M${x - 2} ${y - 11}h4v9h-4z`} fill="#f3f6f8" />
        </g>
      ))}
      {CASTORS.map(([x, y]) => (
        <g key={x} stroke="#a7afb6">
          <ellipse cx={x} cy={y} rx="4" ry="6" fill="#eef1f4" />
          <circle cx={x + 1} cy={y} r="2" fill="#fff" />
        </g>
      ))}

      {/* camera arm behind the monitors */}
      <path d="M563 156c2-6 12-7 15 4l-3 4z" fill="#3e3c42" stroke="#111" />
      <path d="M539 178l10-10v43l-7 3-4-6v-21z" fill="#44424a" stroke="#111" />
      <path d="M531 183l5-13 4-2 4 5-7 12z" fill="#222" />
      <path d="M519 211l19 5-2 7-18-5z" fill="#1c1b1e" stroke="#000" />
      <path d="M538 217l12 1v6l-12-1z" fill="#eceef0" stroke="#bbb" />

      {/* upper gantry */}
      <path d="M582 236l52 16v32l-52-10z" fill="#d9e1e6" />
      <path d="M626 250l8 2v26l-5 1z" fill="#f2f5f7" stroke="#b4bcc2" />
      <path d="M586 234l27 6v22l-6-2v-16l-21-5z" fill="#1b1a1c" stroke="#000" />

      {/* monitors */}
      <path d="M549 158L556 154L749 210L748 278L745 281L550 226z" fill="#5b5151" stroke="#111" />
      <path d="M551 157L556 154L749 210L744 215z" fill="#000" />
      <path d="M744 215L749 210L748 278L744 281z" fill="#39363b" />
      <path d="M553 162L644 188V245L553 218z" fill="#5b52ff" stroke="#1a1840" />
      <path d="M651 191L743 217V273L651 247z" fill="#5b52ff" stroke="#1a1840" />
      <path d="M647 185V253" stroke="#111" strokeWidth="1.5" />

      {/* operator panel */}
      <path d="M682 267L726 280V312L682 301z" fill="#2d2b78" stroke="#111344" />
      <path d="M683 269l4 1v31l-4-1z" fill="#5552a0" />
      <path d="M688 273L721 283V308L688 299z" fill="#77737e" stroke="#111" />
      <path d="M691 276L715 283V303L691 297z" fill="#dcf7ff" stroke="#223" />
      <path d="M717 284l3 1v21l-3-1z" fill="#15143c" />
      <circle cx="734" cy="291" r="4" fill="#b03f22" stroke="#6a2210" />
      <circle cx="736" cy="301" r="4" fill="#b9bcbd" stroke="#888" />
      <circle cx="736" cy="301" r="1.500" fill="#f2f2f2" />
      <path d="M734 310h5v4h-5z" fill="#6e6767" />

      {/* orange housing behind the stations */}
      <path d="M628 289L663 298V311L655 318L628 303z" fill="#9c3f02" stroke="#ff7a10" />
      <path d="M655 318l8-7v22l-8 5z" fill="#ff8c32" stroke="#e86400" />
      <path d="M631 296l9 3-6 9-6-2z" fill="#161518" />
      <path d="M628 308l12-7 14 3v16l-10 6-12-6z" fill="#ccd2d7" stroke="#8e959b" />
      <path d="M640 301l14 3-7 5-14-4z" fill="#a6adb3" />

      {/* camera head */}
      <path d="M554 257L614 273V305L554 290z" fill="#ff9450" stroke="#e86a18" />
      <path d="M614 273L628 262V300L614 308z" fill="#ff7d20" stroke="#d65a08" />
      <path d="M554 257L568 244L628 262L614 273z" fill="#050505" />
      <path d="M579 253L596 241L606 244V253L589 264L580 261z" fill="#e4e9ec" stroke="#8f999f" />
      <path d="M588 250l13-8 4 2-12 9z" fill="#a9b1b7" />
      <path d="M562 272L609 285V297L560 283z" fill="#101010" />
      <path d="M563 278l45 12" stroke="#5a5a5e" strokeWidth="1.500" strokeDasharray="2 2" />
      <path d="M563 285l45 12" stroke="#d9d5c8" strokeWidth="3" strokeDasharray="1 3" />

      {/* bed and infeed table */}
      <path d="M524 310L560 308L650 336V348L545 320L520 330z" fill="#94989c" />
      <path d="M556 310l14 2 6 10-10 4-14-4zM628 332l10 2v10l-10-3z" fill="#f3f5f7" />
      <path d="M478 302c-2-6 6-8 10-4l-6 8z" fill="#1d1c1f" />
      <path d="M440 340L493 293L528 302L478 350z" fill="#989898" stroke="#555" />
      <path d="M440 341L478 350V372L439 363z" fill="#fffff6" />
      <path d="M462 344L522 297L530 301V318L474 366L468 352z" fill="#414047" stroke="#111" />
      <path d="M466 346L526 299" stroke="#d8dde2" strokeWidth="1.500" strokeDasharray="6 1" />
      <path d="M474 353L529 309" stroke="#c8ccd2" strokeWidth="2.500" />
      <path d="M474 365L494 350V340L478 353z" fill="#2b2a2f" />
      <path d="M452 353c6-4 14-2 20 1l-6 20c-5 3-12 2-17-2z" fill="#cfd2d6" stroke="#8f949a" />
      <path d="M458 352l-3 21" stroke="#fff" strokeWidth="3" />

      {/* station rail */}
      <path d="M519 274L642 310V325L630 322L516 287z" fill="#ff8126" stroke="#d85c08" />
      <path d="M507 274l9-2 8 4-2 9-14-2z" fill="#232226" />
      <path d="M515 272l6-1 3 5-4 8-4-2z" fill="#aeb4b8" stroke="#444" strokeWidth="0.800" />
      <path d="M538 276l3-3 2 7h-6z" fill="#1822e0" />
      <path d="M538 270l8-5 2 5-6 5z" fill="#e0e4e8" stroke="#aaa" strokeWidth="0.800" />
      <path d="M530 318c8-6 16-2 12 6l-10 4z" fill="#d2d6d9" stroke="#555" />
      {STATIONS.map(([x, y]) => (
        <g key={x}>
          <path d={`M${x + 4} ${y - 10}l6-3 5 2v13l-5 3-6-2z`} fill="#2a282d" stroke="#000" strokeWidth="0.8" />
          <path d={`M${x + 10} ${y - 9}v12`} stroke="#66636a" />
          <path d={`M${x - 1} ${y - 12}l5-1 1-4 3 1v4l5 2-3 2-11-2z`} fill="#161518" />
          <path d={`M${x + 16} ${y - 6}l5 1v4l-5-1z`} fill="#f3efe8" stroke="#333" strokeWidth="0.7" />
          <path d={`M${x - 5} ${y - 2}l3-3 9 1v9l-3 2-9-2z`} fill="#cdbc7c" stroke="#6f632f" strokeWidth="0.8" />
          <path d={`M${x - 4} ${y - 1}l8 1v7`} fill="none" stroke="#e9dfae" />
          <path d={`M${x - 2} ${y + 8}h5v5l-2 2-3-2z`} fill="#c6ccd1" stroke="#444" strokeWidth="0.7" />
        </g>
      ))}
      <path d="M588 323l4-2 10 3-2 5-10-3z" fill="#1a191c" />
      <circle cx="646" cy="330" r="5" fill="#d8d8d8" stroke="#111" strokeWidth="2" />
      <path d="M633 330l7 2v17l-7-3z" fill="#eef1f3" stroke="#aaa" />

      {/* orange cover box */}
      <path d="M492 352L528 326L545 318L501 356V376L492 371z" fill="#a34a3c" stroke="#7c2a20" />
      <path d="M545 317L632 342L590 378L501 355z" fill="#9c3f02" stroke="#ff7a10" />
      <path d="M501 355L590 378V411L501 387z" fill="#ff9b56" stroke="#f0700e" />
      <path d="M590 378L632 342V376L590 411z" fill="#ff8c32" stroke="#f0700e" />
      <path d="M598 391L630 366M597 396L630 370" stroke="#ffe9c8" strokeDasharray="5 3" />

      {/* conveyor */}
      <path d="M662 370L808 408V420L662 378z" fill="#f6f6ee" />
      <path d="M662 374L700 379L812 414V424L662 383z" fill="#060606" />
      <path d="M632 353L664 362V383L632 376z" fill="#5b5151" stroke="#111" />
      <path d="M664 365l6 2v10l-6-2z" fill="#3b383e" />
      <path d="M662 380L834 432" stroke="#5b5151" strokeWidth="3" />
      <path d="M635 352L648 345L838 399L822 411L640 362z" fill="#9b9d9d" stroke="#555" />
      <path d="M648 349L832 402" stroke="#3c3c3c" strokeWidth="1.500" />
      <path d="M645 353L824 405" stroke="#e2e4e4" strokeWidth="1.500" />
      <path d="M641 359L820 409" stroke="#60625f" strokeWidth="1.500" strokeDasharray="8 2" />
      <path d="M664 356L820 401" stroke="#c4c6c6" />
      <path d="M807 407L834 414V434L807 425z" fill="#5b5151" stroke="#111" />
      <path d="M834 414L843 403V427L834 434z" fill="#242226" stroke="#000" />
      <path d="M822 406l8-5 13 2-8 11z" fill="#151416" />
      <circle cx="838" cy="406" r="2" fill="#c8b070" />
      <circle cx="828" cy="413" r="2" fill="#a8b0b4" />
      <circle cx="638" cy="359" r="2" fill="#c8c8c0" stroke="#111" />
      <path d="M650 340l10-7 8 3v8l-9 7-9-3z" fill="#38363b" stroke="#111" />
      <path d="M640 345l10 3" stroke="#222" strokeWidth="3" />
    </svg>
  );
}

function SiteLogo() {
  return (
    <div className="pointer-events-none absolute bottom-[13px] right-1">
      <svg width="170" height="80" viewBox="0 0 170 80" fill="none" className="overflow-visible" role="img" aria-label="技田社区 addskills.cn">
        <path d="M52 46C62 58 78 64 100 63C122 61 131 48 131 34A24 25 0 0 0 83 34C83 42 86 48 91 52" stroke="#fff" strokeWidth="11" strokeLinecap="round" />
        <text x="3" y="59" fontSize="63" fontWeight="700" className="font-['Noto_Sans_CJK_SC',sans-serif]" fill="#0a6fc0" stroke="#0a6fc0" strokeWidth="2" strokeLinejoin="round">
          技
        </text>
        <path d="M52 46C62 58 78 64 100 63C122 61 131 48 131 34A24 25 0 0 0 83 34C83 42 86 48 91 52" stroke="#0a6fc0" strokeWidth="8" strokeLinecap="round" />
        <path d="M107 23v23M96 34h22" stroke="#f79a0c" strokeWidth="8" strokeLinecap="round" />
        <rect x="138" y="12" width="31" height="45" rx="4" fill="#f79a0c" />
        <g fontSize="20" fontWeight="700" fill="#fff" textAnchor="middle" className="font-['Noto_Sans_CJK_SC',sans-serif]">
          <text x="153" y="32">社</text>
          <text x="153" y="52">区</text>
        </g>
        <text x="10" y="77" fontSize="11" fontWeight="700" className="font-['Noto_Sans',sans-serif]" fill="#2f86cc">
          addskills.cn
        </text>
      </svg>
    </div>
  );
}

/* ------------------------------------------------------------- lower bars */

const SELECTORS = [
  { name: "选择", mark: "M1 9v9M1 18h2M4 15h6M7 12v6", tint: "#18a0e0" },
  { name: "添加选择", mark: "M1 16h6M4 13v6", tint: "#18a0e0" },
  { name: "移除选择", mark: "M1 16h6", tint: "#18a0e0" },
  { name: "清除选择", mark: "", tint: "#8aa4b4" },
];

const CUBES = [
  { name: "等轴测 1", top: "#b8c4ff", left: "#8c9cf0", right: "#1c6b24", axes: "M4 1l5 5M9 1L4 6M11 1l3 5M14 1l-3 5" },
  { name: "等轴测 2", top: "#1c6b24", left: "#a8b4ff", right: "#2030d8", axes: "M1 5h13M8 1v5M4 3h3M11 2v3" },
  { name: "等轴测 3", top: "#a8c4b8", left: "#1c6b24", right: "#1818e0", axes: "M3 1l4 4M7 1L3 5M10 2h4M10 5h4" },
  { name: "等轴测 4", top: "#a8c8d8", left: "#1c6b24", right: "#1c6b24", axes: "M8 0v4l-5 3M8 4l5 3M1 4h3M12 3h3" },
];

const PLANES = [
  { name: "前视图", a: "#1414f0", b: "#1414f0", axes: "M1 8h9V1M12 1h3M12 4h3" },
  { name: "后视图", a: "#1c6b24", b: "#1c6b24", axes: "M2 1v7h11M3 1h3" },
  { name: "左视图", a: "#1414f0", b: "#1414f0", axes: "M4 1v7h9M1 1h3" },
  { name: "右视图", a: "#1c6b24", b: "#1414f0", axes: "M2 8h9V1M12 1h3" },
  { name: "俯视图", a: "#1c6b24", b: "#1414f0", axes: "M4 1v7h9M1 2h3" },
];

const Grip = ({ className = "" }: { className?: string }) => <span className={`h-5 border-l-2 border-dotted border-[#c4c5c7] ${className}`} />;

function CommandBar() {
  return (
    <div className="flex h-[29px] shrink-0 items-center bg-[#fbfbfc] pl-[2px]">
      <Grip />
      <div className="relative ml-[2px] w-[278px]">
        <select aria-label="命令" className="block h-5 w-full appearance-none border border-[#8f9092] bg-white">
          <option></option>
        </select>
        <svg width="8" height="5" viewBox="0 0 8 5" fill="none" className="pointer-events-none absolute right-[3px] top-2">
          <path d="M1 1l3 3 3-3" stroke="#555" />
        </svg>
      </div>
      <button type="button" aria-label="确定" className="ml-px flex h-5 w-5 items-center justify-center bg-[#c9cacc]">
        <Svg w={16} h={12}>
          <path d="M14 2v5H5" stroke="#fff" strokeWidth="3.500" />
          <path d="M14 2v4H5M6 3L2 6l4 3z" stroke="#8d8e90" strokeWidth="1.700" />
        </Svg>
      </button>
      <button type="button" aria-label="取消" className="ml-px flex h-5 w-5 items-center justify-center bg-[#c9cacc]">
        <Svg w={12} h={12}>
          <path d="M3 3l8 8M11 3l-8 8" stroke="#fff" strokeWidth="1.600" />
          <path d="M2 2l8 8M10 2l-8 8" stroke="#8d8e90" strokeWidth="1.600" />
        </Svg>
      </button>
      <Grip className="ml-[6px]" />
      <div className="ml-[6px] flex gap-[5px]">
        {SELECTORS.map((s) => (
          <button key={s.name} type="button" aria-label={s.name}>
            <Svg w={18} h={20}>
              <path d="M1 7h4M5 5h5v5H5zM5 8h5" stroke="#111" strokeWidth="1.400" />
              <path d="M17 2l-6 5 6 5" stroke={s.tint} strokeWidth="2" />
              <path d={s.mark} stroke="#1a22c0" strokeWidth="1.300" />
            </Svg>
          </button>
        ))}
      </div>
      <Grip className="ml-1" />
      <div className="ml-[6px] flex gap-[6px]">
        {CUBES.map((c) => (
          <button key={c.name} type="button" aria-label={c.name}>
            <Svg w={16} h={20}>
              <path d={c.axes} stroke="#3c48d8" strokeWidth="0.900" />
              <path d="M2 10l6-3 6 3-6 3z" fill={c.top} stroke="#111" />
              <path d="M2 10l6 3v6l-6-3z" fill={c.left} stroke="#111" />
              <path d="M14 10l-6 3v6l6-3z" fill={c.right} stroke="#111" />
            </Svg>
          </button>
        ))}
        {PLANES.map((p) => (
          <button key={p.name} type="button" aria-label={p.name}>
            <Svg w={16} h={20}>
              <path d={p.axes} stroke="#3c48d8" />
              <path d="M4 10h8v8z" fill={p.b} />
              <path d="M4 10v8h8z" fill={p.a} />
              <path d="M4 10h8v8H4z" stroke="#111" />
            </Svg>
          </button>
        ))}
      </div>
      <Grip className="ml-[6px]" />
      <button type="button" aria-label="橡皮擦" className="ml-[6px]">
        <Svg w={19} h={20}>
          <path d="M1 5V3h16v2" stroke="#222" />
          <path d="M2 7l5 5-4 5M7 12l5 5" stroke="#8a90e0" strokeDasharray="2 1" />
          <path d="M8 9l3-2 6 4v3l-3 2-6-4z" fill="#ddd" stroke="#222" />
          <path d="M8 9l3-2 2 6-5-1z" fill="#e05a30" />
        </Svg>
      </button>
      <button type="button" aria-label="擦除全部" disabled className="ml-1 opacity-40">
        <Svg w={19} h={20}>
          <path d="M1 5V3h16v2" stroke="#222" />
          <path d="M2 15l4-8 2 8M3 12h4" stroke="#e090b0" />
          <path d="M8 9l3-2 6 4v3l-3 2-6-4z" fill="#ddd" stroke="#444" />
          <path d="M8 9l3-2 2 6-5-1z" fill="#e0907a" />
        </Svg>
      </button>
    </div>
  );
}

function StatusBar() {
  return (
    <footer className="flex h-[18px] shrink-0 items-center border-t-2 border-[#9a9b9d] bg-[#eceef1] pl-[6px] text-[#222]">
      <p className="flex-1 truncate">单击一个命令或预选装配、零件、工作平面、面或边。. 按住 SHIFT 键选择多项。</p>
      <div className="flex h-full items-center">
        <span className="mr-[7px] h-full w-px bg-gray-300" />
        <Svg w={14} h={12}>
          <path d="M1 3h12M2 10l3-5M12 10L9 5M4 9h6" stroke="#333" />
          <path d="M4 5h6v4H4z" fill="#eda52c" stroke="#8a5a10" />
        </Svg>
        <span className="ml-[6px]">
          <Svg w={14} h={13}>
            <path d="M7 1l6 11H1z" fill="#f6cf94" stroke="#dca860" />
            <path d="M7 4v4M7 9v2" stroke="#555" strokeWidth="1.400" />
          </Svg>
        </span>
        <span className="ml-1 h-full w-[14px] border-r border-gray-300 bg-[#fdfdfd]" />
        <span className="ml-[2px] h-full w-[14px] border-r border-gray-300 bg-[#fdfdfd]" />
        <button type="button" className="ml-[3px]">
          捕捉
        </button>
        <button type="button" className="ml-3">
          单位
        </button>
        <div className="relative ml-[11px] h-full w-[46px]">
          <select aria-label="选择过滤" className="block h-full w-full appearance-none bg-white pl-[2px]">
            <option>全部</option>
          </select>
          <span className="pointer-events-none absolute right-1 top-[7px] flex">
            <Caret />
          </span>
        </div>
        <div className="flex items-center gap-[7px] pl-1 pr-[2px]">
          <button type="button" aria-label="窗口">
            <Svg w={14} h={14}>
              <rect x="1.500" y="2.500" width="11" height="9" fill="#e6effa" stroke="#2a62b8" />
              <path d="M3 4h6v5H3z" fill="#7aa8e0" />
              <path d="M10 5v4M3 10h8" stroke="#2a62b8" />
            </Svg>
          </button>
          <button type="button" aria-label="缩放">
            <Svg w={14} h={14}>
              <rect x="0.500" y="0.500" width="13" height="13" fill="#fff" stroke={BLUE} />
              <path d="M3 3h7v7H3z" stroke="#333" strokeDasharray="2 1" />
              <circle cx="7" cy="7" r="3" fill="#a8c8ea" stroke="#346" />
              <path d="M9 9l3 3" stroke="#234" strokeWidth="1.500" />
            </Svg>
          </button>
          <button type="button" aria-label="上一视图">
            <Svg w={14} h={14}>
              <rect x="0.500" y="0.500" width="13" height="13" fill="#fff" stroke={BLUE} />
              <path d="M4 7l6-4v8z" fill="#111150" />
            </Svg>
          </button>
          <button type="button" aria-label="适合窗口">
            <Svg w={14} h={14}>
              <rect x="0.500" y="0.500" width="13" height="13" fill="#fff" stroke={BLUE} />
              <path d="M7 2l2 3H5zM7 12l2-3H5zM2 7l3-2v4zM12 7L9 5v4zM6 6h2v2H6zM3 3h1v1H3zM10 3h1v1h-1zM3 10h1v1H3zM10 10h1v1h-1z" fill="#1c98d8" />
            </Svg>
          </button>
          <button type="button" aria-label="导航">
            <Svg w={13} h={12}>
              <path d="M5 2v8L1 6zM8 2v8l4-4z" fill="#8a8c90" />
            </Svg>
          </button>
        </div>
      </div>
    </footer>
  );
}

/* -------------------------------------------------------------------- app */

export default function App() {
  return (
    <div className="relative flex h-screen flex-col overflow-hidden bg-[#fbfbfc] font-['Noto_Sans','Noto_Sans_CJK_SC',sans-serif] text-[10px] leading-[14px] text-[#3a3a3a]">
      <TitleBar />
      <TabBar />
      <Ribbon />
      <main className="mt-[2px] flex min-h-0 flex-1 gap-[3px]">
        <Browser />
        <div className="min-w-0 flex-1 border border-r-0 border-[#c4c5c7]">
          <Machine />
        </div>
      </main>
      <CommandBar />
      <StatusBar />
      <SiteLogo />

      {/* mouse pointer over the quick access bar */}
      <svg width="12" height="17" viewBox="0 0 12 17" className="pointer-events-none absolute left-[144px] top-[10px]" aria-hidden="true">
        <path d="M1 1v13l3-3 2 5 2-1-2-5h4z" fill="#fff" stroke="#999" />
      </svg>
    </div>
  );
}
